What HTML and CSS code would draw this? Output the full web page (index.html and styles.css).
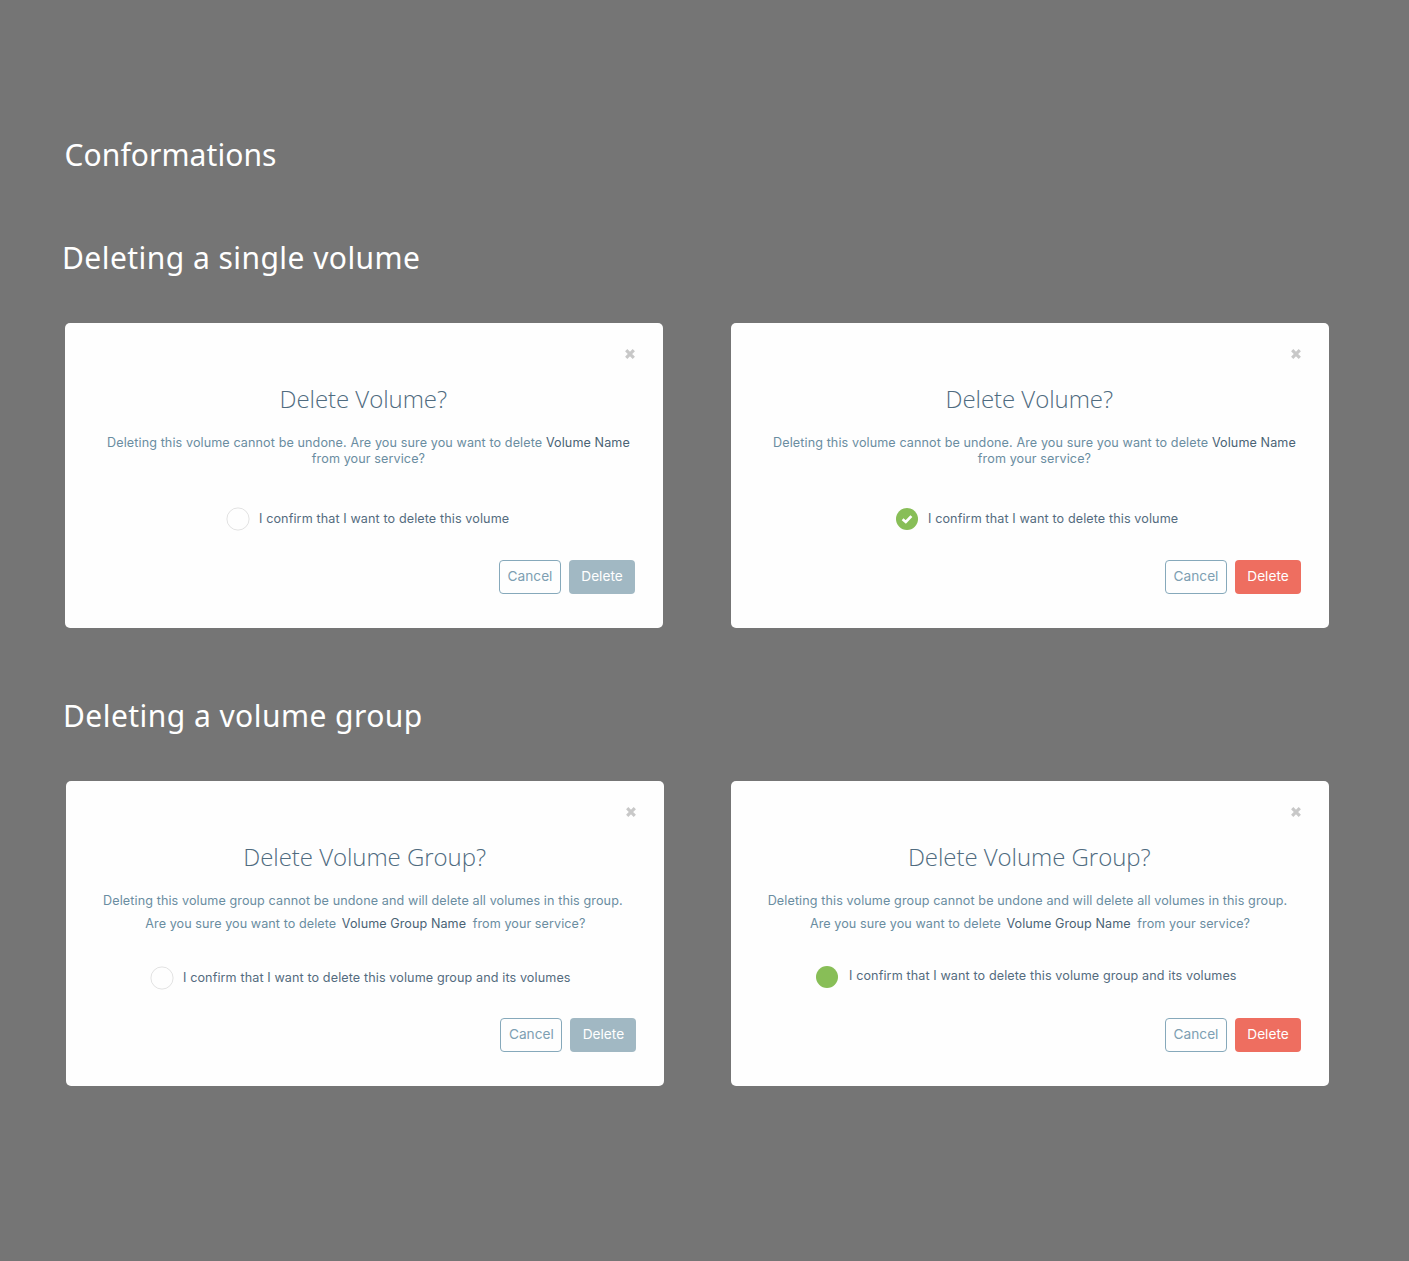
FILE: index.html
```html
<!DOCTYPE html>
<html lang="en">
<head>
<meta charset="utf-8">
<title>Delete volume confirmations</title>
<link rel="stylesheet" href="styles.css">
</head>
<body>
<main class="board">
  <h1 class="heading page-title">Conformations</h1>

  <h2 class="heading single-title">Deleting a single volume</h2>
  <section class="row single">
    <article class="dialog">
      <button class="close" aria-label="Close"><svg viewBox="0 0 10 10"><path d="M1.2 1.2 8.8 8.8M8.8 1.2 1.2 8.8"/></svg></button>
      <h3 class="title">Delete Volume?</h3>
      <p class="message">Deleting this volume cannot be undone. Are you sure you want to delete <b class="name">Volume Name</b><br>from your service?</p>
      <label class="confirm"><svg class="ring" viewBox="0 0 24 24"><circle cx="12" cy="12" r="11.1"/></svg><span class="label">I confirm that I want to delete this volume</span></label>
      <footer class="actions"><button class="btn cancel">Cancel</button><button class="btn disabled">Delete</button></footer>
    </article>
    <article class="dialog">
      <button class="close" aria-label="Close"><svg viewBox="0 0 10 10"><path d="M1.2 1.2 8.8 8.8M8.8 1.2 1.2 8.8"/></svg></button>
      <h3 class="title">Delete Volume?</h3>
      <p class="message">Deleting this volume cannot be undone. Are you sure you want to delete <b class="name">Volume Name</b><br>from your service?</p>
      <label class="confirm checked"><span class="tick"><svg viewBox="0 0 12 10"><path d="M1.6 5.2 4.8 8 10.4 2.1"/></svg></span><span class="label">I confirm that I want to delete this volume</span></label>
      <footer class="actions"><button class="btn cancel">Cancel</button><button class="btn danger">Delete</button></footer>
    </article>
  </section>

  <h2 class="heading group-title">Deleting a volume group</h2>
  <section class="row group">
    <article class="dialog">
      <button class="close" aria-label="Close"><svg viewBox="0 0 10 10"><path d="M1.2 1.2 8.8 8.8M8.8 1.2 1.2 8.8"/></svg></button>
      <h3 class="title">Delete Volume Group?</h3>
      <p class="message"><span class="line first">Deleting this volume group cannot be undone and will delete all volumes in this group.</span><span class="line">Are you sure you want to delete <b class="name">Volume Group Name</b> from your service?</span></p>
      <label class="confirm"><svg class="ring" viewBox="0 0 24 24"><circle cx="12" cy="12" r="11.1"/></svg><span class="label">I confirm that I want to delete this volume group and its volumes</span></label>
      <footer class="actions"><button class="btn cancel">Cancel</button><button class="btn disabled">Delete</button></footer>
    </article>
    <article class="dialog">
      <button class="close" aria-label="Close"><svg viewBox="0 0 10 10"><path d="M1.2 1.2 8.8 8.8M8.8 1.2 1.2 8.8"/></svg></button>
      <h3 class="title">Delete Volume Group?</h3>
      <p class="message"><span class="line first">Deleting this volume group cannot be undone and will delete all volumes in this group.</span><span class="line">Are you sure you want to delete <b class="name">Volume Group Name</b> from your service?</span></p>
      <label class="confirm checked"><span class="tick"></span><span class="label">I confirm that I want to delete this volume group and its volumes</span></label>
      <footer class="actions"><button class="btn cancel">Cancel</button><button class="btn danger">Delete</button></footer>
    </article>
  </section>
</main>
</body>
</html>
```
FILE: styles.css
```css
* { box-sizing: border-box; }
body {
  margin: 0;
  background: #757575;
  font-family: Inter, "Liberation Sans", sans-serif;
}
.board {
  display: flex;
  flex-direction: column;
  min-height: 1261px;
  padding: 134px 80px 0 65px;
}
.heading {
  margin: 0;
  height: 42px;
  font: 400 30px/42px "Noto Sans", "Open Sans", sans-serif;
  letter-spacing: 0.45px;
  color: #fff;
  white-space: nowrap;
}
.page-title { margin-left: -0.5px; letter-spacing: 0.08px; }
.single-title { margin: 61px 0 0 -3px; }
.group-title { margin: 67px 0 0 -2px; }
.row { display: flex; gap: 68px; margin-top: 44px; }
.dialog {
  display: flex;
  flex-direction: column;
  flex: none;
  width: 598px;
  height: 305px;
  padding: 26px 28px 34px;
  border-radius: 5px;
  background: #fefefe;
}
button { border: 0; padding: 0; background: none; font-family: inherit; }
.close { display: flex; align-self: flex-end; width: 10px; height: 10px; }
.close svg { width: 10px; height: 10px; overflow: visible; }
.close path { fill: none; stroke: #c8c8c8; stroke-width: 3.2; }
.title {
  margin: 20px 1.5px 0 0;
  font: 300 24px/40px "Open Sans", sans-serif;
  letter-spacing: -0.05px;
  text-align: center;
  color: #4f6b7f;
}
.message {
  margin: 16px -9px 0 0;
  font-size: 12.6px;
  line-height: 16px;
  letter-spacing: 0.1px;
  text-align: center;
  white-space: nowrap;
  color: #6a8da1;
}
.name { font-weight: 400; color: #4a6375; }
.confirm {
  display: flex;
  align-items: center;
  align-self: flex-start;
  gap: 9px;
  height: 24px;
  margin: 40px 0 0 133px;
  font-size: 12.6px;
  line-height: 16px;
  letter-spacing: 0.11px;
  white-space: nowrap;
  color: #546c7e;
}
.confirm.checked { gap: 10px; margin-left: 137px; }
.label { margin-bottom: 1px; }
.ring { width: 24px; height: 24px; fill: none; stroke: #e2e2e2; }
.tick {
  display: flex;
  align-items: center;
  justify-content: center;
  width: 22px;
  height: 22px;
  border-radius: 50%;
  background: #88be57;
}
.tick svg { width: 12px; height: 10px; }
.tick path { fill: none; stroke: #fff; stroke-width: 2.7; }
.actions { display: flex; justify-content: flex-end; gap: 8px; margin-top: auto; }
.btn {
  width: 62px;
  height: 34px;
  padding-bottom: 2px;
  border-radius: 4px;
  font-size: 13.7px;
}
.cancel { border: 1px solid #86a9bb; color: #7d9fb2; }
.disabled, .danger { width: 66px; color: #fff; }
.disabled { background: #a1b8c3; }
.danger { background: #ee6e60; }

.group .dialog:first-child { margin: 0 -1.4px 0 1.4px; }
.group .message { margin: 12px 0 0; line-height: 23px; }
.group .name { margin: 0 3px 0 2px; }
.line { display: block; letter-spacing: 0.07px; }
.line.first { padding-right: 5px; letter-spacing: 0.1px; }
.group .confirm { margin: 31px 0 0 55.6px; }
.group .confirm.checked { gap: 11px; margin: 30px 0 0 57px; }
.group .checked .label { margin-bottom: 3px; }
```
